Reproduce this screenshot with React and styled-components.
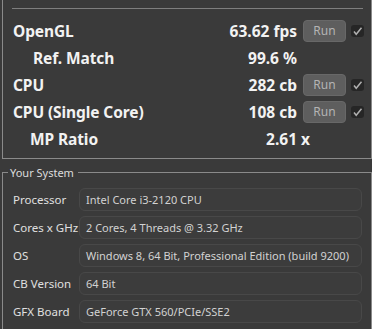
import React from "react";
import styled, { createGlobalStyle } from "styled-components";

const Global = createGlobalStyle`
  html, body {
    margin: 0;
    padding: 0;
    background: #3a3a3a;
  }
  body {
    font-family: "Noto Sans", "Open Sans", sans-serif;
  }
`

const Page = styled.div`
  width: 372px;
  height: 329px;
  overflow: hidden;
  background: #3a3a3a;
`

const Results = styled.div`
  margin-left: 2px;
  width: 368px;
  border-left: 1px solid #8a8a8a;
  border-right: 1px solid #8a8a8a;
  border-bottom: 1px solid #8a8a8a;
  padding: 8px 0 6px;
`

const Separator = styled.div`
  height: 1px;
  background: #7e7e7e;
  margin: 0 8px 8px 9px;
`

const Row = styled.div`
  display: flex;
  align-items: center;
  height: 27px;
  padding-right: 7px;
`

const Label = styled.div`
  flex: 1;
  padding-left: ${p => p.$indent}px;
  color: #f2f2f2;
  font-weight: 700;
  font-size: 15.5px;
  letter-spacing: -0.1px;
`

const Value = styled.div`
  color: #f2f2f2;
  font-weight: 700;
  font-size: 15.5px;
  margin-right: ${p => p.$gap}px;
`

const RunButton = styled.div`
  width: 43px;
  height: 22px;
  box-sizing: border-box;
  border-radius: 4px;
  background: #5e5e5e;
  border: 1px solid #686868;
  color: #b4b4b4;
  font-size: 12px;
  display: flex;
  align-items: center;
  justify-content: center;
`

const Check = styled.div`
  width: 13px;
  height: 12px;
  margin-left: 5px;
  border-radius: 3px;
  background: #262626;
  display: flex;
  align-items: center;
  justify-content: center;
`

const Spacer = styled.div`
  width: ${p => p.$w}px;
`

const System = styled.fieldset`
  margin: 6px 0 0 2px;
  width: 370px;
  box-sizing: border-box;
  border: 1px solid #8a8a8a;
  padding: 8px 9px 30px 10px;
  min-inline-size: 0;
`

const Legend = styled.legend`
  padding: 0 4px 0 2px;
  margin-left: -5px;
  color: #dcdcdc;
  font-size: 11px;
`

const InfoRow = styled.div`
  display: grid;
  grid-template-columns: 66px 1fr;
  align-items: center;
  margin-bottom: 5px;
`

const InfoLabel = styled.div`
  color: #e0e0e0;
  font-size: 11.5px;
`

const InfoBox = styled.div`
  height: 23px;
  box-sizing: border-box;
  border: 1px solid #484848;
  border-radius: 6px;
  background: #3c3c3c;
  color: #d2d2d2;
  font-size: 11px;
  padding-left: 6px;
  display: flex;
  align-items: center;
  white-space: nowrap;
  overflow: hidden;
`

function Tick() {
  return (
    <svg width="11" height="10" viewBox="0 0 11 10">
      <path d="M2 5.5 L4.2 8.2 L9.5 1.8" fill="none" stroke="#b0b0b0" strokeWidth="1.5" />
    </svg>
  );
}

const rows = [
  { label: "OpenGL", indent: 10, value: "63.62 fps", run: true },
  { label: "Ref. Match", indent: 30, value: "99.6 %" },
  { label: "CPU", indent: 10, value: "282 cb", run: true },
  { label: "CPU (Single Core)", indent: 10, value: "108 cb", run: true },
  { label: "MP Ratio", indent: 27, value: "2.61 x", offset: -13 },
];

const info = [
  ["Processor", "Intel Core i3-2120 CPU"],
  ["Cores x GHz", "2 Cores, 4 Threads @ 3.32 GHz"],
  ["OS", "Windows 8, 64 Bit, Professional Edition (build 9200)"],
  ["CB Version", "64 Bit"],
  ["GFX Board", "GeForce GTX 560/PCIe/SSE2"],
];

export default function App() {
  return (
    <Page>
      <Global />
      <Results>
        <Separator />
        {rows.map(r => (
          <Row key={r.label}>
            <Label $indent={r.indent}>{r.label}</Label>
            <Value $gap={6 + (r.offset || 0)}>{r.value}</Value>
            {r.run ? (
              <>
                <RunButton>Run</RunButton>
                <Check><Tick /></Check>
              </>
            ) : (
              <Spacer $w={61} />
            )}
          </Row>
        ))}
      </Results>
      <System>
        <Legend>Your System</Legend>
        {info.map(([k, v]) => (
          <InfoRow key={k}>
            <InfoLabel>{k}</InfoLabel>
            <InfoBox>{v}</InfoBox>
          </InfoRow>
        ))}
      </System>
    </Page>
  );
}
